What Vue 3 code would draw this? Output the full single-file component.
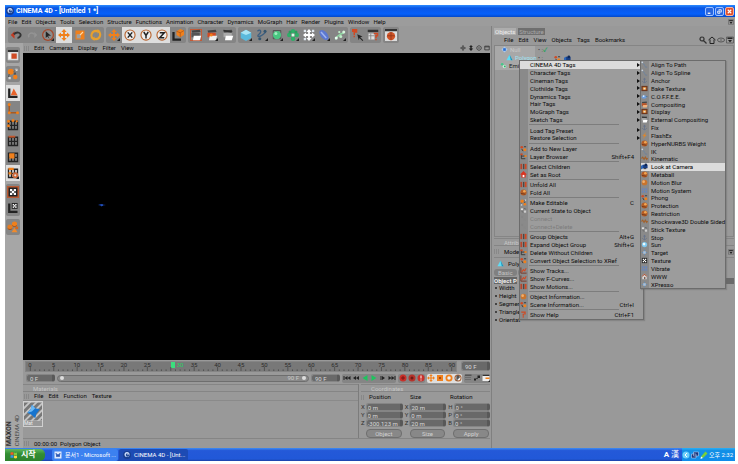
<script setup>
import { ref } from 'vue'

const O = '#f0801c'
const R = '#d04a24'
const D = '#222'
const rect = (x, y, w, h, f) => `<rect x="${x}" y="${y}" width="${w}" height="${h}" fill="${f}"/>`
const dot = (x, y, r, f) => `<circle cx="${x}" cy="${y}" r="${r}" fill="${f}"/>`
const line = (d, c, w = 2) => `<path d="${d}" fill="none" stroke="${c}" stroke-width="${w}"/>`
const shape = (d, f) => `<path d="${d}" fill="${f}"/>`
const cross = (c) => shape('M8 0l3.500 4H9.200v2.800H12V4.500L16 8l-4 3.500V9.200H9.200V12h2.300L8 16l-3.500-4h2.300V9.200H4v2.300L0 8l4-3.500v2.300h2.800V4H4.500z', c)
const grid = line('M2 3h12v11H2zM2 8.500h12M6 3v11M10 3v11', D, 1.8)
const axisLetter = (d) => dot(8, 8, 7.500, '#b8622c') + dot(8, 8, 6, '#eee') + line(d, '#222', 2)
const clap = (a, b) => shape('M2 2l11-1 1 3L3 5z', '#444') + rect(2, 5, 11, 6, a) + shape('M5 9h10l-2 6H4z', b)
const more = shape('M16 12v4h-4z', D)
const corner = line('M3 2v11h11', D, 3)
const checker = rect(2, 2, 12, 12, '#222') + rect(4, 4, 3, 3, '#fff') + rect(9, 4, 3, 3, '#fff') + rect(6.500, 6.500, 3, 3, '#fff') + rect(4, 9, 3, 3, '#fff') + rect(9, 9, 3, 3, '#fff')

const icons = {
  undo: shape('M1 8l5-5v10z', '#c23b22') + line('M5 7c5-5 10-1 9 2-1 2-2 3-4 3', '#333', 2.500),
  redo: shape('M15 8l-4-4v8z', '#949494') + line('M11 7c-5-4-9 1-7 4', '#949494', 2),
  select: dot(8, 8, 8, '#a5492d') + dot(8, 8, 6.300, '#8c8c8c') + shape('M5 3l7 6-4 0 2 4-3-3-2 2z', D) + more,
  move: cross(O),
  movePlain: cross(O) + more,
  scale: rect(2, 2, 12, 12, O) + rect(3.500, 7, 5.500, 5.500, '#a0a0a0') + line('M8 8l4-4', '#ffd9a8', 1.500),
  rotate: line('M4 13A6 6 0 0 1 8 2.500l3 0.500M12 3.500a6 6 0 0 1-4 10l-3-0.500', '#e8a02c', 2.800) + shape('M10 0l4 3-4 3z', '#e8a02c') + shape('M6 16l-4-3 4-3z', '#e8a02c'),
  x: axisLetter('M5 4.500l6 7M11 4.500l-6 7'),
  y: axisLetter('M5 4l3 4.500L11 4M8 8v4.500'),
  z: axisLetter('M5 5h6l-6 6.500h6'),
  coord: line('M2 4v10h10', D, 3) + shape('M6 3l5-3 5 2v6l-5 3-5-3z', O) + line('M6 3l5 2v6M11 5l5-3', '#a8541a', 1),
  render: rect(0, 0, 16, 16, '#c25b38') + rect(1.500, 1.500, 13, 13, '#8a8a8a') + clap('#555', '#fff'),
  renderView: clap(R, '#eee') + dot(7, 8, 2, O) + more,
  renderSet: clap('#aaa', '#fff') + line('M2 2l11 2', '#333', 2),
  cube: shape('M8 1l7 4v7l-7 4-7-4V5z', '#5ab9dc') + shape('M8 1l7 4-7 3-7-3z', '#a9e4f4') + more,
  spline: line('M2 3c4-4 6 1 2 4s0 6 9-3', '#3d5f80', 1.800) + dot(12, 3, 2, '#34556f') + dot(5, 13, 2, '#34556f') + more,
  nurbs: line('M3 2h10v11H3z', '#444', 1) + dot(8, 8, 5.500, '#49c781') + dot(6.500, 6, 2, '#a1edbf') + more,
  array: dot(8, 3, 3, '#2fae68') + dot(3, 8, 3, '#2fae68') + dot(13, 8, 3, '#2fae68') + dot(8, 13, 3, '#2fae68') + dot(4, 4, 2, '#2b9d5e') + dot(12, 4, 2, '#2b9d5e') + dot(8, 8, 2, '#d7ffe6') + more,
  scene: cross('#fff') + rect(1, 1, 3, 3, '#dfe7ee') + rect(12, 1, 3, 3, '#dfe7ee') + rect(1, 12, 3, 3, '#dfe7ee') + more,
  deformer: '<ellipse cx="8" cy="8" rx="4.500" ry="8" transform="rotate(-40 8 8)" fill="#5c78d0"/>' + line('M4 4l7 8', '#9fb4f0', 2) + more,
  particle: line('M2 14c2-5 5-7 11-9', '#8fd8a2', 2) + dot(13, 4, 2, '#d6f5dc') + dot(7, 4, 1.500, '#c0eec8') + dot(9, 10, 2, '#c0eec8') + dot(3, 12, 2, '#e8fff0') + more,
  help: shape('M0 0h7v5H4v3H2V4H0z', R) + rect(2, 9, 2, 2, R) + shape('M7 7l7 3-3 1 4 4-1 1-4-4-1 3z', D),
  menuHelp: rect(1, 1, 14, 3, '#333') + rect(2, 6, 8, 8, '#ddd') + line('M2 9h8M5 6v8', '#777', 1) + shape('M9 5h6v5h-2v2h-2V8h2V7H9z', R) + rect(11, 13, 2, 2, R),
  web: rect(0, 0, 16, 16, '#ddd') + rect(0, 0, 16, 3, '#333') + dot(8, 9.500, 5.500, '#d05427') + line('M3 9h10M8 4v11', '#8d3418', 1),
  layout: rect(1, 1, 14, 14, '#ddd') + rect(1, 1, 14, 3, '#333') + rect(6, 6, 7, 7, R) + rect(2, 6, 3, 7, '#fff'),
  makeEditable: dot(5, 5, 4, O) + rect(11, 1, 3, 3, '#ddd') + rect(9, 6, 3, 3, '#555') + dot(11, 12, 3, O) + rect(2, 12, 3, 3, '#ddd') + line('M3 8l-1 4M9 5l3-3', '#444', 1),
  model: corner + shape('M9 2l5 9H5z', '#e8632a'),
  axis: line('M3 1v12h12', '#a85b22', 2) + dot(3, 2, 2, O) + dot(3, 13, 2, O) + dot(14, 13, 2, O),
  points: grid + dot(2, 3, 2, O) + dot(8, 2, 2, O) + dot(2, 9, 2, O) + dot(13, 3, 1.500, O),
  edges: grid + rect(2, 1, 9, 2.500, '#c2562c'),
  polygons: grid + rect(3, 3, 7, 7, O),
  animation: grid + rect(2, 1, 7, 3, O) + rect(2, 7, 4, 3, O) + dot(11, 11, 4, '#cc6838') + dot(11, 11, 1.500, '#ddd') + more,
  texture: rect(0, 0, 16, 16, '#b95b34') + checker,
  textureAxis: corner + '<g transform="translate(5 0) scale(.65)">' + checker + '</g>',
  objects: dot(4, 8, 3.500, '#e47c22') + dot(10, 4, 3.500, O) + shape('M10 9l4 6H6z', '#f08a2c') + dot(13, 9, 2, '#d96619') + line('M1 10a4 4 0 0 0 6 0M7 6a4 4 0 0 0 6 0', '#8f4516', 1),
  first: rect(1, 4, 2, 8, D) + shape('M9 4v8L3 8zM15 4v8L9 8z', D),
  prev: shape('M8 4v8L2 8zM14 4v8L8 8z', D),
  back: shape('M13 2v12L3 8z', '#1fc45e'),
  play: shape('M3 2v12l10-6z', '#1fc45e'),
  next: rect(3, 4, 2, 8, D) + shape('M6 4v8l6-4z', D),
  last: rect(13, 4, 2, 8, D) + shape('M1 4v8l6-4zM7 4v8l6-4z', D),
  record: dot(8, 8, 7, '#c8302a') + line('M4 8h8M8 4v8', '#611', 1.500),
  autokey: dot(8, 8, 7, '#b5332c') + dot(8, 8, 3, '#6c1a16'),
  keysel: dot(8, 8, 7, '#c8302a') + rect(7, 3, 2, 6, '#fff') + rect(7, 11, 2, 2, '#fff'),
  square: rect(2, 2, 12, 12, O) + rect(6, 6, 4, 4, '#ab4b12'),
  ring: dot(8, 8, 7, O) + dot(8, 8, 3.500, '#eee'),
  param: dot(8, 8, 7, '#a55a2a') + dot(8, 8, 5, '#eee') + line('M6 13V4h4v4H6', '#222', 2),
  film: rect(2, 1, 13, 3, '#555') + line('M2 7h12M2 11h12', '#666', 1.500),
  dots: rect(2, 9, 4, 4, D) + rect(9, 3, 5, 5, D) + dot(8, 9, 1.500, D),
  key: rect(1, 1, 14, 13, '#eee') + rect(1, 1, 14, 3, '#333') + rect(7, 7, 8, 3, O) + more,
  pan: cross('#444'),
  dolly: shape('M8 0l5 5h-3v4h4l-6 7-6-7h4V5H3z', '#222'),
  orbit: line('M8 2a6 6 0 1 0 .1 0', '#444', 2.500) + dot(8, 8, 2, '#444'),
  maximize: line('M2 3h12v10H2zM2 5h12', '#333', 2),
  search: line('M6 2a4 4 0 1 0 .1 0M9 9l6 6', '#333', 2.500),
  home: line('M1 8l7-6 7 6M4 7v8h8V7', '#222', 2),
  eye: '<ellipse cx="8" cy="8" rx="7" ry="4" fill="none" stroke="#555" stroke-width="2"/>' + dot(8, 8, 1.500, '#555'),
  drop: line('M1 2h14v12H1z', '#555', 1.500) + rect(3, 3, 10, 3, '#222') + shape('M4 8h8l-4 5z', '#222'),
  app: dot(8, 8, 8, '#183f92') + dot(8, 7, 5, '#cfe0ff') + dot(9, 8, 3.500, '#244c9a') + dot(10, 6, 1.500, '#fff'),
  word: rect(1, 1, 14, 14, '#dfe9fb') + line('M4 4l2 8 2-6 2 6 2-8', '#2a56b4', 2),
  flag: shape('M1 3c2-1 4-1 6 0v5c-2-1-4-1-6 0z', '#f25a29') + shape('M8 3c2 1 4 1 6 0v5c-2 1-4 1-6 0z', '#81c840') + shape('M1 9c2-1 4-1 6 0v5c-2-1-4-1-6 0z', '#3b8df0') + shape('M8 9c2 1 4 1 6 0v5c-2 1-4 1-6 0z', '#ffd23c'),
  emitter: shape('M8 1l7 7-7 7-7-7z', '#a8c8f0') + rect(5, 5, 6, 6, '#2b6fd0'),
  polygon: shape('M8 1l7 13H1z', '#5fdcf5') + shape('M8 1l3 13h4z', '#258fb2'),
  leaf: dot(5, 5, 3, '#43c98a') + dot(10, 10, 4, '#c5ecd4') + dot(11, 10, 2, '#2fae68'),
  material: shape('M0 0h16v16H0z', '#777') + line('M-2 7L7-2M-2 13L13-2M0 17L17 0M5 18L18 5M11 18l7-7', '#c5c5c5', 1.600) + shape('M7 2l3 3 4 1-3 4-1 4-3-3-4-2 3-3z', '#1674cf') + shape('M7 2l3 3-3 3-4 1 3-3z', '#6ab8f5'),
  pair: dot(4, 5, 3, R) + dot(11, 11, 3.500, O) + line('M4 9l3 5M9 4h5', '#333', 2),
  tree: line('M3 2v11h9M3 7h9', '#333', 2) + rect(1, 1, 5, 4, R) + rect(10, 5, 5, 4, O),
  bars: rect(1, 2, 4, 12, '#b8442a') + rect(7, 2, 3, 12, '#444') + rect(11, 2, 4, 12, R),
  house: shape('M8 0l8 8h-3v7H3V8H0z', '#d93421') + rect(6, 9, 4, 5, '#fff'),
  www: shape('M8 1l7 7h-2v6H3V8H1z', '#d8d8d8') + shape('M8 1l7 7h-3L8 4 4 8H1z', '#a8553a') + rect(7, 9, 3, 5, '#7a5648'),
  graph: line('M2 1v13h13', '#7a2f1b', 2) + line('M4 11l4-5 3 3 3-6', R, 2.500),
  info: dot(8, 8, 6.500, '#c8742d') + dot(6, 6, 3, '#efb070'),
  question: shape('M3 1h10v7H9v3H6V6h4V4H3z', '#d14a22') + rect(6, 12, 3, 3, '#d14a22'),
  chips: rect(2, 3, 5, 4, '#ddd') + rect(9, 8, 5, 5, '#ccc') + line('M4 9l3 4M9 3l5 2', '#666', 2),
  faded: rect(3, 2, 4, 5, '#858585') + rect(8, 8, 5, 5, '#888'),
  curve: line('M2 2c1 5 4 2 6 8s5 4 6 4', '#6c84a0', 2) + dot(3, 3, 2, '#cbd5e0'),
  anchor: line('M8 2v12M3 9c1 5 9 5 10 0M5 5h6', '#68758c', 2),
  photo: rect(1, 2, 14, 12, '#6e371f') + rect(4, 5, 8, 6, '#ee9b42') + dot(8, 8, 2, '#ddd'),
  cup: '<ellipse cx="7" cy="9" rx="6" ry="4" fill="#6e9edc"/>' + dot(6, 7, 2, '#def') + line('M11 8h4', '#579', 2),
  clapper: clap('#b95427', '#f2b27e'),
  flash: shape('M12 0L3 9h4l-3 7 9-9H9z', '#d88732'),
  camera: rect(4, 4, 11, 8, '#163c82') + shape('M0 6l5-2v8l-5 3z', '#2b65b8') + dot(11, 4, 3, '#0d2654') + rect(6, 12, 6, 2, '#222'),
  ball: dot(8, 8, 7, '#b55d25') + dot(10, 5, 3, '#f0a754') + line('M2 10l10 2', '#5a2d18', 1.500),
  blueball: dot(8, 8, 6, '#7ec8ee') + dot(7, 7, 3, '#e9faff'),
  arrows: line('M2 8h12M8 2v12', '#648fb8', 2) + rect(5, 5, 6, 6, '#a9bfd6'),
  lattice: line('M3 2v12M8 2v12M13 2v12M2 5h12M2 11h12', '#6487c4', 1.500),
  checker,
  wave: line('M1 8l3-3 3 5 3-5 3 5 2-3', '#a3622d', 2.500)
}

const mainMenu = ['File', 'Edit', 'Objects', 'Tools', 'Selection', 'Structure', 'Functions', 'Animation', 'Character', 'Dynamics', 'MoGraph', 'Hair', 'Render', 'Plugins', 'Window', 'Help']
const toolbar = [
  { id: 'edit', tools: ['undo', 'redo', 'select', 'move', 'scale', 'rotate'] },
  { id: 'axes', tools: ['movePlain', 'x', 'y', 'z', 'coord'] },
  { id: 'render', tools: ['render', 'renderView', 'renderSet'] },
  { id: 'create', tools: ['cube', 'spline', 'nurbs', 'array', 'scene', 'deformer', 'particle'] },
  { id: 'help', tools: ['help', 'menuHelp'] },
  { id: 'web', tools: ['web'] }
]
const modes = [['layout'], ['makeEditable'], ['model', 'axis', 'points', 'edges', 'polygons', 'animation'], ['texture', 'textureAxis'], ['objects']]
const active = new Set(['move', 'x', 'y', 'z', 'model', 'animation'])
const transport = [
  { id: 'play', tools: ['first', 'prev', 'back', 'play', 'next', 'last'] },
  { id: 'rec', tools: ['record', 'autokey', 'keysel'] },
  { id: 'keys', tools: ['move', 'square', 'ring', 'param'] },
  { id: 'extra', tools: ['film', 'dots', 'key'] }
]
const frames = Array.from({ length: 19 }, (_, i) => i * 5)
const ticks = Array.from({ length: 91 }, (_, i) => `M${i + 0.5} ${i % 5 ? 3 : 0}V5`).join('')

const contextMenu = [
  ...['CINEMA 4D Tags', 'Character Tags', 'Cineman Tags', 'Clothilde Tags', 'Dynamics Tags', 'Hair Tags', 'MoGraph Tags', 'Sketch Tags'].map((t) => ({ t, sub: true })),
  null,
  { t: 'Load Tag Preset', sub: true }, { t: 'Restore Selection', sub: true },
  null,
  { t: 'Add to New Layer', i: 'pair' }, { t: 'Layer Browser', i: 'tree', k: 'Shift+F4' },
  null,
  { t: 'Select Children', i: 'bars' }, { t: 'Set as Root', i: 'house' },
  null,
  { t: 'Unfold All', i: 'bars' }, { t: 'Fold All', i: 'ball' },
  null,
  { t: 'Make Editable', i: 'makeEditable', k: 'C' }, { t: 'Current State to Object', i: 'chips' },
  { t: 'Connect', i: 'faded', off: true }, { t: 'Connect+Delete', i: 'faded', off: true },
  null,
  { t: 'Group Objects', i: 'bars', k: 'Alt+G' }, { t: 'Expand Object Group', i: 'bars', k: 'Shift+G' },
  { t: 'Delete Without Children', i: 'tree' }, { t: 'Convert Object Selection to XRef', i: 'pair' },
  null,
  { t: 'Show Tracks...', i: 'graph' }, { t: 'Show F-Curves...', i: 'graph' }, { t: 'Show Motions...', i: 'bars' },
  null,
  { t: 'Object Information...', i: 'info' }, { t: 'Scene Information...', i: 'pair', k: 'Ctrl+I' },
  null,
  { t: 'Show Help', i: 'question', k: 'Ctrl+F1' }
]
const tagMenu = [
  ['Align To Path', 'curve'], ['Align To Spline', 'curve'], ['Anchor', 'anchor'], ['Bake Texture', 'photo'], ['C.O.F.F.E.E.', 'cup'],
  ['Compositing', 'clapper'], ['Display', 'photo'], ['External Compositing', 'renderSet'], ['Fix', 'anchor'], ['FlashEx', 'flash'],
  ['HyperNURBS Weight', 'ball'], ['IK', 'curve'], ['Kinematic', 'wave'], ['Look at Camera', 'camera'], ['Metaball', 'ball'],
  ['Motion Blur', 'info'], ['Motion System', 'lattice'], ['Phong', 'pair'], ['Protection', 'ball'], ['Restriction', 'ball'],
  ['Shockwave3D Double Sided', 'wave'], ['Stick Texture', 'chips'], ['Stop', 'anchor'], ['Sun', 'blueball'], ['Target', 'arrows'],
  ['Texture', 'checker'], ['Vibrate', 'lattice'], ['WWW', 'www'], ['XPresso', 'arrows']
]
const coords = ref([
  { a: 'X', p: '0 m', b: 'X', s: '20 m', c: 'H', r: '0 °' },
  { a: 'Y', p: '0 m', b: 'Y', s: '0 m', c: 'P', r: '0 °' },
  { a: 'Z', p: '-300.123 m', b: 'Z', s: '20 m', c: 'B', r: '0 °' }
])
</script>

<template>
  <div class="page">
    <header class="title">
      <svg class="ico" viewBox="0 0 16 16" v-html="icons.app" />
      <h1>CINEMA 4D - [Untitled 1 *]</h1>
      <button class="win" aria-label="Minimize"><svg viewBox="0 0 8 8"><path d="M2 6h3" stroke="#fff" stroke-width="1.5" /></svg></button>
      <button class="win" aria-label="Restore"><svg viewBox="0 0 8 8"><path d="M3 2h3v3M2 3.500h2.500v2.500H2z" stroke="#fff" fill="none" /></svg></button>
      <button class="win close" aria-label="Close"><svg viewBox="0 0 8 8"><path d="M2 2l4 4M6 2L2 6" stroke="#fff" stroke-width="1.300" /></svg></button>
    </header>
    <nav class="menubar main">
      <button v-for="m in mainMenu" :key="m">{{ m }}</button>
      <svg class="ico end" viewBox="0 0 16 16" v-html="icons.drop" />
    </nav>

    <div class="body">
      <div class="left">
        <div class="toolbar">
          <div v-for="g in toolbar" :key="g.id" class="group" :class="g.id">
            <button v-for="t in g.tools" :key="t" class="tool" :class="{ on: active.has(t) }" :aria-label="t">
              <svg viewBox="0 0 16 16" v-html="icons[t]" />
            </button>
          </div>
        </div>
        <div class="work">
          <aside class="modes">
            <div v-for="(g, n) in modes" :key="n" class="group column">
              <button v-for="t in g" :key="t" class="tool" :class="{ on: active.has(t) }" :aria-label="t">
                <svg viewBox="0 0 16 16" v-html="icons[t]" />
              </button>
            </div>
            <div class="brand"><span>CINEMA 4D</span><b>MAXON</b></div>
          </aside>
          <main class="center">
            <nav class="menubar">
              <i class="grip" />
              <button v-for="m in ['Edit', 'Cameras', 'Display', 'Filter', 'View']" :key="m">{{ m }}</button>
              <span class="corner">
                <svg v-for="i in ['pan', 'dolly', 'orbit', 'maximize']" :key="i" viewBox="0 0 16 16" v-html="icons[i]" />
              </span>
            </nav>
            <section class="viewport">
              <svg class="object" viewBox="0 0 16 8"><path d="M0 4l5-2 4 1 7 1-6 1-3 2-3-2z" fill="#143c9c" /><path d="M6 3h4v2H6z" fill="#2f63d8" /></svg>
            </section>
            <div class="timeline">
              <div class="ruler">
                <div class="labels">
                  <span v-for="f in frames" :key="f" :class="{ now: f === 30 }">{{ f }}</span>
                </div>
                <svg class="ticks" viewBox="0 0 91 5" preserveAspectRatio="none"><path :d="ticks" stroke="#333" stroke-width="0.200" /></svg>
              </div>
              <input class="field" aria-label="End frame" value="90 F">
            </div>
            <div class="transport">
              <input class="field" aria-label="Start frame" value="0 F">
              <div class="range">
                <input type="range" aria-label="Preview range" min="0" max="90" value="0"><span>90 F</span><i />
              </div>
              <input class="field" aria-label="Preview end" value="90 F">
              <div v-for="g in transport" :key="g.id" class="group" :class="g.id">
                <button v-for="t in g.tools" :key="t" class="tool" :aria-label="t"><svg viewBox="0 0 16 16" v-html="icons[t]" /></button>
              </div>
            </div>
            <div class="managers">
              <section class="materials">
                <h2>Materials</h2>
                <nav class="menubar">
                  <i class="grip" />
                  <button v-for="m in ['File', 'Edit', 'Function', 'Texture']" :key="m">{{ m }}</button>
                </nav>
                <button class="swatch" aria-label="Material"><svg viewBox="0 0 16 16" v-html="icons.material" /><small>Mat</small></button>
              </section>
              <section class="coords">
                <h2>Coordinates</h2>
                <div class="heads"><i class="grip" /><span>Position</span><span>Size</span><span>Rotation</span></div>
                <div class="fields">
                  <template v-for="c in coords" :key="c.a">
                    <label>{{ c.a }}<input v-model="c.p" class="field"></label>
                    <label>{{ c.b }}<input v-model="c.s" class="field"></label>
                    <label>{{ c.c }}<input v-model="c.r" class="field"></label>
                  </template>
                  <select aria-label="Coordinate system"><option>Object</option></select>
                  <select aria-label="Size mode"><option>Size</option></select>
                  <button class="apply">Apply</button>
                </div>
              </section>
            </div>
            <footer class="status"><i class="grip" />00:00:00&nbsp; Polygon Object</footer>
          </main>
        </div>
      </div>

      <aside class="right">
        <div class="tabs"><button class="current">Objects</button><button>Structure</button></div>
        <nav class="menubar">
          <button v-for="m in ['File', 'Edit', 'View', 'Objects', 'Tags', 'Bookmarks']" :key="m">{{ m }}</button>
          <span class="corner">
            <svg v-for="i in ['search', 'home', 'eye', 'drop']" :key="i" viewBox="0 0 16 16" v-html="icons[i]" />
          </span>
        </nav>
        <div class="tree">
          <div class="node"><span class="name root"><svg viewBox="0 0 16 16" v-html="icons.emitter" />Null</span><span class="flags">• :<b>✓</b></span></div>
          <div class="node"><span class="name child"><svg viewBox="0 0 16 16" v-html="icons.polygon" />Polygon</span><span class="flags">• :</span><svg viewBox="0 0 16 16" v-html="icons.pair" /><svg viewBox="0 0 16 16" v-html="icons.camera" /></div>
          <div class="node"><span class="name leaf"><svg viewBox="0 0 16 16" v-html="icons.leaf" />Emi</span></div>
        </div>
        <section class="attributes">
          <h2>Attribu</h2>
          <nav class="menubar">
            <i class="grip" /><button>Mode</button>
            <span class="corner"><svg viewBox="0 0 16 16" v-html="icons.drop" /></span>
          </nav>
          <div class="object-name"><svg viewBox="0 0 16 16" v-html="icons.polygon" />Polyg</div>
          <div class="pills"><button>Basic</button><button>C</button></div>
          <div class="props-head"><h3>Object P</h3><i /></div>
          <ul class="props">
            <li v-for="p in ['Width', 'Height', 'Segmen', 'Triangle', 'Orientat']" :key="p">{{ p }}</li>
          </ul>
        </section>

        <ul class="popup context">
          <li v-for="(m, n) in contextMenu" :key="n" :class="{ rule: !m, lit: n === 0 }">
            <button v-if="m" :disabled="m.off">
              <svg viewBox="0 0 16 16" v-html="m.i ? icons[m.i] : ''" />
              <span>{{ m.t }}</span><kbd v-if="m.k">{{ m.k }}</kbd><i v-if="m.sub" class="arrow" />
            </button>
          </li>
        </ul>
        <ul class="popup tags">
          <li v-for="[t, i] in tagMenu" :key="t" :class="{ lit: t === 'Look at Camera' }">
            <button><svg viewBox="0 0 16 16" v-html="icons[i]" /><span>{{ t }}</span></button>
          </li>
        </ul>
      </aside>
    </div>

    <footer class="taskbar">
      <button class="start"><svg viewBox="0 0 16 16" v-html="icons.flag" />시작</button>
      <button class="task"><svg viewBox="0 0 16 16" v-html="icons.word" />문서1 - Microsoft ...</button>
      <button class="task pressed"><svg viewBox="0 0 16 16" v-html="icons.app" />CINEMA 4D - [Unt...</button>
      <span class="ime"><b>A</b> 漢</span>
      <div class="tray">
        <svg viewBox="0 0 16 16"><circle cx="8" cy="8" r="7" fill="#6fd0fa" /><path d="M10 4L6 8l4 4" stroke="#fff" stroke-width="2" fill="none" /></svg>
        <svg viewBox="0 0 16 16"><path d="M5 2h10v8H5zM1 6h9v8H1z" fill="#1c3478" stroke="#cfe0ff" /></svg>
        <svg viewBox="0 0 16 16"><path d="M2 11l9-10 4 4-9 9z" fill="#7bd03a" /><path d="M2 11l4 3-5 2z" fill="#fff" /></svg>
        <time>오후 2:32</time>
      </div>
    </footer>
  </div>
</template>

<style>
body { margin: 0; background: #fff; }
</style>

<style scoped>
* { box-sizing: border-box; }
.page { height: 100vh; padding: 5px 3px 3px 5px; display: flex; flex-direction: column; font: 6px/8px Roboto, "Noto Sans CJK KR", sans-serif; color: #0c0c0c; overflow: hidden; }
button, input, select { font: inherit; color: inherit; padding: 0; margin: 0; border: 0; background: none; border-radius: 0; min-width: 0; }
h1, h2, h3, ul { margin: 0; padding: 0; font: inherit; list-style: none; }
svg { display: block; flex: none; }
.title { height: 12px; flex: none; display: flex; align-items: center; gap: 1px; padding: 0 1px; background: linear-gradient(#2c8cff, #0a57e6 25%, #0560fa 75%, #0348c8); color: #fff; }
.title .ico { width: 8px; height: 8px; }
.title h1 { flex: 1; font: bold 7px/10px Roboto, sans-serif; padding-left: 1px; }
.win { width: 9px; height: 9px; border: 1px solid #9cc0ff; border-radius: 2px; background: #2866e0; }
.win.close { background: #e0502c; border-color: #f6b5a0; }
.win svg { width: 7px; height: 7px; }
.menubar { display: flex; align-items: center; gap: 5px; height: 9px; flex: none; white-space: nowrap; }
.main { background: #9c9c9c; padding: 0 1px 0 3px; gap: 4px; }
.main .ico { width: 6px; height: 6px; margin-left: auto; }
.body { flex: 1; min-height: 0; display: flex; background: #999; }
.left { flex: 1; min-width: 0; display: flex; flex-direction: column; }
.toolbar { display: flex; gap: 2px; height: 17px; padding: 1px 3px 0; flex: none; }
.group { display: flex; background: #858585; border-radius: 2px; }
.group.edit { width: 96px; }
.group.axes { width: 80px; }
.group.render { width: 48px; }
.group.create { width: 110px; }
.group.help { width: 31px; }
.group.web { width: 16px; }
.tool { flex: 1; display: flex; align-items: center; justify-content: center; }
.tool svg { width: 12px; height: 12px; }
.tool.on { background: #dedede; }
.work { flex: 1; min-height: 0; display: flex; }
.modes { width: 18px; flex: none; display: flex; flex-direction: column; gap: 3px; padding: 4px 3px 2px 1px; background: #a6a6a6; }
.column { flex-direction: column; }
.modes .tool { flex: none; height: 16px; }
.brand { margin-top: auto; writing-mode: vertical-rl; transform: rotate(180deg); line-height: 7px; color: #444; display: flex; flex-direction: column; }
.brand { flex-direction: column-reverse; }
.brand b { color: #333; font-size: 7px; }
.center { flex: 1; min-width: 0; display: flex; flex-direction: column; padding-right: 1px; }
.grip { width: 5px; height: 5px; flex: none; background: repeating-linear-gradient(90deg, #777 0 1px, transparent 1px 2px); opacity: 0.5; }
.center > .menubar { padding-left: 1px; height: 10px; }
.corner { margin-left: auto; display: flex; gap: 2px; }
.corner svg { width: 6px; height: 6px; }
.viewport { flex: 1; min-height: 0; background: #000; position: relative; }
.object { position: absolute; left: 16%; top: 49%; width: 8px; height: 4px; }
.timeline { display: flex; height: 12px; gap: 4px; padding: 1px 0 0 2px; flex: none; }
.ruler { flex: 1; background: #787878; border: 1px solid #858585; padding: 0 2px; display: flex; flex-direction: column; color: #2c2c2c; }
.labels { display: flex; justify-content: space-between; height: 5px; line-height: 5px; padding: 0 2px; }
.labels span { width: 0; display: flex; justify-content: center; }
.labels .now { color: #25d366; justify-content: flex-start; gap: 2px; }
.now::before { content: ""; width: 4px; height: 6px; background: #3be07e; flex: none; }
.ticks { width: 100%; height: 4px; }
.field { background: #696969; color: #d8d8d8; border: 1px solid #858585; border-right: 3px solid #585858; border-radius: 3px; height: 8px; line-height: 6px; padding: 0 3px; width: 29px; }
.timeline .field { height: 10px; }
.transport { height: 12px; flex: none; display: flex; align-items: center; gap: 2px; padding-left: 3px; }
.range { flex: 1; height: 7px; display: flex; align-items: center; gap: 3px; background: #8a8a8a; border: 1px solid #6e6e6e; border-radius: 4px; color: #c8c8c8; padding: 0 2px; }
.range input { flex: 1; appearance: none; height: 4px; }
.range input::-webkit-slider-thumb { appearance: none; width: 4px; height: 4px; border-radius: 2px; background: #ddd; }
.range i { width: 4px; height: 4px; border-radius: 2px; background: #ddd; }
.transport .tool svg { width: 8px; height: 8px; }
.transport .group { height: 9px; }
.group.play { width: 54px; }
.group.rec { width: 27px; }
.group.keys { width: 35px; background: #dedede; }
.group.extra { width: 26px; }
h2 { height: 8px; line-height: 7px; color: #c6c6c6; padding-left: 10px; border-top: 1px solid #858585; border-bottom: 1px solid #858585; }
.managers { height: 54px; flex: none; display: flex; gap: 2px; }
.materials { flex: 1; border-right: 1px solid #7c7c7c; }
.materials .menubar { padding-left: 1px; border-bottom: 1px solid #8a8a8a; }
.swatch { width: 20px; height: 26px; background: #d0d0d0; padding: 1px; display: block; color: #eee; }
.swatch svg { width: 18px; height: 19px; }
.swatch small { display: block; font-size: 5px; line-height: 5px; background: #999; text-align: left; }
.coords { width: 129px; }
.heads { display: grid; grid-template-columns: 8px 41px 40px 1fr; height: 10px; align-items: center; }
.heads .grip { width: 4px; }
.fields { display: grid; grid-template-columns: 1fr 1fr 1fr; column-gap: 2px; grid-auto-rows: 8px; padding-top: 1px; }
.fields label { display: flex; align-items: center; gap: 1px; color: #333; }
.fields .field { flex: 1; width: 0; padding: 0 1px; }
.fields select, .apply { appearance: none; height: 9px; margin: 2px 1px 0 5px; line-height: 7px; text-align: center; text-align-last: center; background: #888; border: 1px solid #6f6f6f; border-radius: 4px; color: #d0d0d0; }
.status { height: 10px; flex: none; display: flex; align-items: center; gap: 5px; border-top: 1px solid #858585; padding-left: 1px; }
.right { width: 244px; flex: none; position: relative; border-left: 1px solid #808080; padding: 2px 1px 0 2px; display: flex; flex-direction: column; }
.tabs { display: flex; gap: 2px; height: 7px; line-height: 7px; }
.tabs button { background: #6f6f6f; color: #aaa; padding: 0 1px; }
.tabs .current { background: #adadad; color: #eee; }
.right > .menubar { padding-left: 10px; height: 10px; }
.right > .menubar .corner { gap: 1px; }
.right > .menubar .corner svg { width: 8px; height: 8px; }
.tree { height: 192px; border: 1px solid #858585; }
.node { display: flex; gap: 3px; height: 8px; align-items: center; }
.node svg { width: 7px; height: 7px; }
.name { display: flex; gap: 2px; width: 40px; height: 8px; background: #a8a8a8; color: #c8c8c8; }
.root { padding-left: 6px; }
.child { padding-left: 11px; color: #a0e4f4; }
.leaf { padding-left: 5px; color: #222; }
.flags { color: #444; width: 13px; white-space: nowrap; }
.flags b { color: #27a35b; }
.attributes h2 { margin-top: 1px; }
.attributes .menubar { height: 11px; }
.object-name { display: flex; gap: 4px; align-items: center; height: 12px; padding-left: 3px; border-top: 1px solid #858585; }
.object-name svg { width: 7px; height: 7px; }
.pills { display: flex; gap: 1px; height: 7px; line-height: 7px; }
.pills button { background: #808080; color: #c4c4c4; border-radius: 3px; padding: 0 4px; }
.props-head { display: flex; justify-content: space-between; align-items: center; margin-top: 1px; }
.props-head h3 { font-weight: bold; color: #eee; background: #666; line-height: 7px; }
.props-head i { width: 10px; height: 6px; background: #6a6a6a; }
.props { margin-left: 1px; }
.props li { display: flex; align-items: center; gap: 2px; }
.props li::before { content: ""; width: 2px; height: 2px; background: #444; }
.popup { position: absolute; top: 34px; display: flex; flex-direction: column; background: linear-gradient(90deg, #8a8a8a 8px, #9c9c9c 8px); border: 1px solid #6c6c6c; box-shadow: 1px 1px 1px #6666; }
.popup li { flex: 3; min-height: 0; display: flex; }
.popup .rule { flex: 1; align-items: center; }
.rule::before { content: ""; height: 1px; background: #7d7d7d; width: 90px; margin-left: 9px; }
.popup button { flex: 1; display: flex; align-items: center; gap: 3px; text-align: left; white-space: nowrap; padding: 0 3px 0 0; line-height: 7px; }
.popup button svg { width: 7px; height: 7px; }
.popup button:disabled { color: #7c7c7c; }
.popup kbd { margin-left: auto; font: inherit; padding-right: 6px; }
.popup .lit { background: #dcdcdc; color: #000; }
.arrow { margin-left: auto; border-left: 3px solid #111; border-top: 2px solid transparent; border-bottom: 2px solid transparent; }
.context { left: 27px; width: 125px; height: 260px; }
.tags { left: 148px; width: 86px; height: 229px; }
.taskbar { height: 13px; flex: none; display: flex; align-items: center; color: #fff; background: linear-gradient(#3f8cf3, #2459d8 20%, #2158d8 85%, #1941a5); white-space: nowrap; overflow: hidden; }
.taskbar button { display: flex; align-items: center; gap: 3px; height: 12px; }
.taskbar svg { width: 8px; height: 8px; }
.start { width: 40px; padding-left: 5px; margin-right: 7px; background: linear-gradient(#5fb85f, #338e33 40%, #2d822d); border-radius: 0 5px 5px 0; }
.taskbar .start { font-size: 8px; font-weight: bold; }
.task { width: 66px; padding-left: 2px; margin-right: 1px; background: #3c81f0; border-radius: 2px; }
.pressed { width: 69px; padding-left: 4px; background: #1d4bb4; }
.ime { margin-left: auto; margin-right: 3px; font-size: 8px; }
.tray { width: 53px; height: 13px; display: flex; align-items: center; gap: 1px; background: linear-gradient(#2bb0f5, #128fe6 20%, #0f8ceb); }
.tray time { margin-left: auto; margin-right: 4px; }
</style>
